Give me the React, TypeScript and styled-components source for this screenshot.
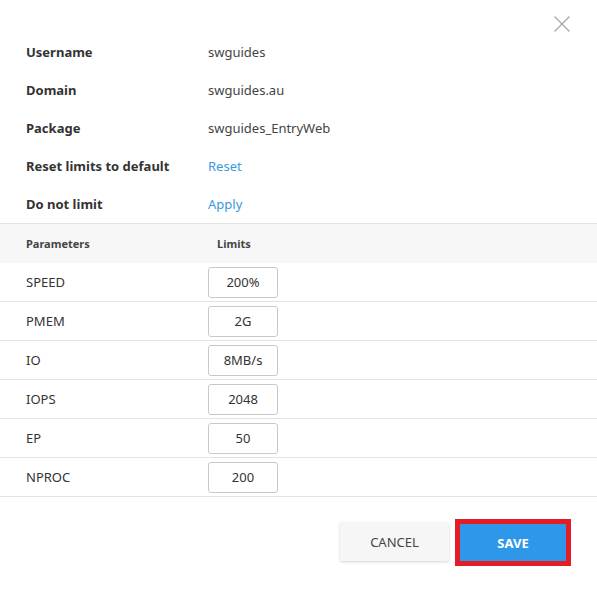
import React from "react";
import styled, { createGlobalStyle } from "styled-components";

const GlobalStyle = createGlobalStyle`
  html, body {
    margin: 0;
    padding: 0;
    background: #fff;
  }
  body {
    font-family: "Noto Sans", "Open Sans", sans-serif;
    font-size: 13px;
    color: #333;
  }
`;

const Dialog = styled.div`
  position: relative;
  width: 597px;
  height: 590px;
  background: #fff;
`;

const CloseButton = styled.button`
  position: absolute;
  top: 16px;
  right: 27px;
  width: 16px;
  height: 16px;
  padding: 0;
  border: none;
  background: none;
  cursor: pointer;
  display: flex;
`;

const InfoList = styled.div`
  padding-top: 33px;
`;

const InfoRow = styled.div`
  display: grid;
  grid-template-columns: 182px 1fr;
  align-items: center;
  height: 38px;
  padding-left: 26px;
`;

const Label = styled.span`
  font-weight: 700;
  color: #333;
`;

const Value = styled.span`
  color: #444;
`;

const Link = styled.a`
  color: #3a98dd;
  cursor: pointer;
  text-decoration: none;
`;

const Table = styled.div`
  border-top: 1px solid #e2e2e2;
`;

const HeadRow = styled.div`
  display: grid;
  grid-template-columns: 191px 1fr;
  align-items: center;
  height: 39px;
  padding-left: 26px;
  background: #f7f7f7;
  font-size: 11px;
  font-weight: 700;
  color: #444;
`;

const Row = styled.div`
  display: grid;
  grid-template-columns: 182px 1fr;
  align-items: center;
  height: 38px;
  padding-left: 26px;
  border-bottom: 1px solid #e2e2e2;
`;

const ParamName = styled.span`
  color: #333;
`;

const LimitInput = styled.input`
  box-sizing: border-box;
  width: 70px;
  height: 31px;
  border: 1px solid #c9c9c9;
  border-radius: 3px;
  font-family: inherit;
  font-size: 13px;
  color: #333;
  text-align: center;
  padding: 0;
  outline: none;
`;

const Footer = styled.div`
  display: flex;
  justify-content: flex-end;
  align-items: flex-start;
  gap: 6px;
  padding: 22px 26px 0 0;
`;

const CancelButton = styled.button`
  margin-top: 3px;
  width: 109px;
  height: 39px;
  border: none;
  border-radius: 2px;
  background: #f6f6f6;
  box-shadow: 0 1px 3px rgba(0, 0, 0, 0.18);
  font-family: inherit;
  font-size: 13px;
  color: #444;
  cursor: pointer;
`;

const SaveButton = styled.button`
  box-sizing: border-box;
  width: 116px;
  height: 47px;
  border: 5px solid #e31d25;
  background: #2e97e9;
  font-family: inherit;
  font-size: 13px;
  font-weight: 700;
  color: #fff;
  cursor: pointer;
`;

const limits = [
  { name: "SPEED", value: "200%" },
  { name: "PMEM", value: "2G" },
  { name: "IO", value: "8MB/s" },
  { name: "IOPS", value: "2048" },
  { name: "EP", value: "50" },
  { name: "NPROC", value: "200" },
];

export default function App() {
  return (
    <>
      <GlobalStyle />
      <Dialog>
        <CloseButton aria-label="Close">
          <svg width="16" height="16" viewBox="0 0 16 16">
            <path d="M0.5 0.5L15.5 15.5M15.5 0.5L0.5 15.5" stroke="#a8a8a8" strokeWidth="1.3" fill="none" />
          </svg>
        </CloseButton>
        <InfoList>
          <InfoRow>
            <Label>Username</Label>
            <Value>swguides</Value>
          </InfoRow>
          <InfoRow>
            <Label>Domain</Label>
            <Value>swguides.au</Value>
          </InfoRow>
          <InfoRow>
            <Label>Package</Label>
            <Value>swguides_EntryWeb</Value>
          </InfoRow>
          <InfoRow>
            <Label>Reset limits to default</Label>
            <Link>Reset</Link>
          </InfoRow>
          <InfoRow>
            <Label>Do not limit</Label>
            <Link>Apply</Link>
          </InfoRow>
        </InfoList>
        <Table>
          <HeadRow>
            <span>Parameters</span>
            <span>Limits</span>
          </HeadRow>
          {limits.map((l) => (
            <Row key={l.name}>
              <ParamName>{l.name}</ParamName>
              <LimitInput defaultValue={l.value} />
            </Row>
          ))}
        </Table>
        <Footer>
          <CancelButton>CANCEL</CancelButton>
          <SaveButton>SAVE</SaveButton>
        </Footer>
      </Dialog>
    </>
  );
}
